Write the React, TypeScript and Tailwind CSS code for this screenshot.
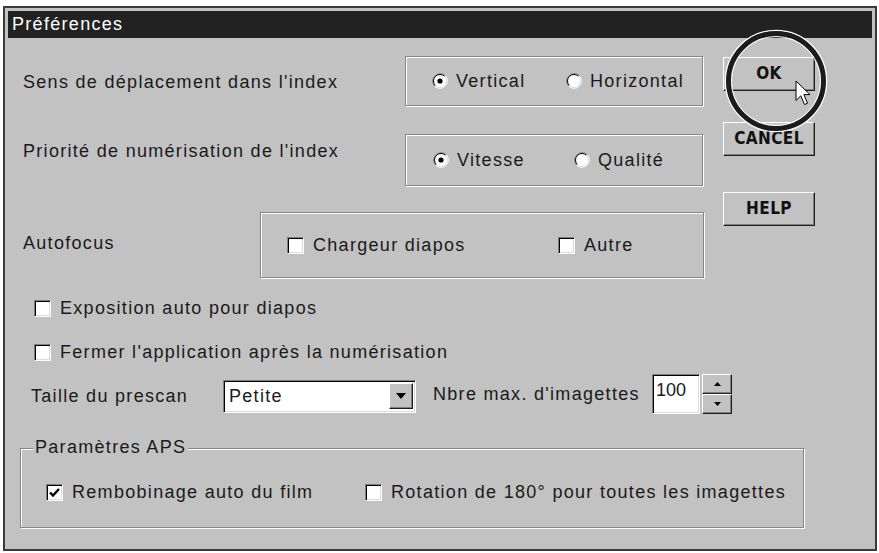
import type { ReactNode } from "react";

/** Old-style "Préférences" dialog: grey window, etched group boxes,
 *  3D buttons, with a highlight circle and cursor over the OK button. */

const label = "text-[18px] leading-[22px] tracking-[1.3px] text-[#1a1a1a] whitespace-nowrap";

function GroupBox({ className, children }: { className?: string; children?: ReactNode }) {
  return (
    <div
      className={`border border-[#858585] shadow-[inset_1px_1px_0_#fff,1px_1px_0_#fff] ${className ?? ""}`}
    >
      {children}
    </div>
  );
}

function Radio({ checked }: { checked?: boolean }) {
  return (
    <svg width="16" height="16" viewBox="0 0 16 16" className="shrink-0">
      <circle cx="8" cy="8" r="7" fill="#fff" />
      <path d="M2.7 13.3 A7.5 7.5 0 0 1 13.3 2.7" fill="none" stroke="#808080" strokeWidth="1" />
      <path d="M3.4 12.6 A6.5 6.5 0 0 1 12.6 3.4" fill="none" stroke="#000" strokeWidth="1" />
      <path d="M13.3 2.7 A7.5 7.5 0 0 1 2.7 13.3" fill="none" stroke="#fff" strokeWidth="1" />
      <path d="M12.6 3.4 A6.5 6.5 0 0 1 3.4 12.6" fill="none" stroke="#dcdcdc" strokeWidth="1" />
      {checked ? <circle cx="8" cy="8" r="2.6" fill="#000" /> : null}
    </svg>
  );
}

function Check({ checked }: { checked?: boolean }) {
  return (
    <span className="shrink-0 w-[17px] h-[17px] bg-white border border-t-[#808080] border-l-[#808080] border-r-white border-b-white shadow-[inset_1px_1px_0_#000,inset_-1px_-1px_0_#dcdcdc] flex items-center justify-center">
      {checked ? (
        <svg width="13" height="13" viewBox="0 0 13 13">
          <path d="M2 6.5 L5 9.5 L11 3" fill="none" stroke="#000" strokeWidth="2.4" />
        </svg>
      ) : null}
    </span>
  );
}

function RadioItem({ text, checked, className }: { text: string; checked?: boolean; className?: string }) {
  return (
    <div className={`flex items-center gap-[8px] ${className ?? ""}`}>
      <Radio checked={checked} />
      <span className={label}>{text}</span>
    </div>
  );
}

function CheckItem({ text, checked, className }: { text: string; checked?: boolean; className?: string }) {
  return (
    <div className={`flex items-center gap-[9px] ${className ?? ""}`}>
      <Check checked={checked} />
      <span className={label}>{text}</span>
    </div>
  );
}

function Button({ text, className }: { text: string; className?: string }) {
  return (
    <div
      className={`w-[92px] h-[34px] flex items-center justify-center bg-[#c2c2c2] border border-t-white border-l-white border-r-[#1e1e1e] border-b-[#1e1e1e] shadow-[inset_-1px_-1px_0_#808080] font-['DejaVu_Sans_Condensed','DejaVu_Sans',sans-serif] font-bold text-[17px] tracking-[0.4px] text-[#111] ${className ?? ""}`}
    >
      {text}
    </div>
  );
}

function Tri({ w, h, up }: { w: number; h: number; up?: boolean }) {
  return (
    <svg width={w} height={h} viewBox={`0 0 ${w} ${h}`}>
      <path d={up ? `M0 ${h} H${w} L${w / 2} 0 Z` : `M0 0 H${w} L${w / 2} ${h} Z`} fill="#000" />
    </svg>
  );
}

export default function App() {
  return (
    <div className="min-h-screen bg-white pt-[6px] pl-[3px] font-['Liberation_Sans',Arial,sans-serif]">
      <div className="relative w-[874px] h-[545px] border-2 border-[#3a3a3a] bg-[#c2c2c2] p-[3px]">
        {/* title bar */}
        <div className="h-[27px] bg-[#222] pl-[4px] flex items-center text-white text-[18px] tracking-[1.3px]">
          Préférences
        </div>

        {/* top section: option rows + button column */}
        <div className="flex">
          <div className="w-[697px] pl-[15px]">
            <div className="mt-[18px] flex h-[50px]">
              <div className={`w-[382px] pt-[15px] ${label}`}>Sens de déplacement dans l'index</div>
              <GroupBox className="w-[298px] h-[50px] flex items-center pl-[26px]">
                <RadioItem text="Vertical" checked className="w-[134px]" />
                <RadioItem text="Horizontal" />
              </GroupBox>
            </div>
            <div className="mt-[28px] flex h-[52px]">
              <div className={`w-[382px] pt-[6px] ${label}`}>Priorité de numérisation de l'index</div>
              <GroupBox className="w-[298px] h-[52px] flex items-center pl-[27px]">
                <RadioItem text="Vitesse" checked className="w-[141px]" />
                <RadioItem text="Qualité" />
              </GroupBox>
            </div>
            <div className="mt-[26px] flex h-[66px]">
              <div className={`w-[237px] pt-[20px] ${label}`}>Autofocus</div>
              <GroupBox className="w-[444px] h-[66px] flex items-center pl-[26px]">
                <CheckItem text="Chargeur diapos" className="w-[271px]" />
                <CheckItem text="Autre" />
              </GroupBox>
            </div>
          </div>
          <div className="ml-[18px] flex flex-col">
            <Button text="OK" className="mt-[19px]" />
            <Button text="CANCEL" className="mt-[31px] h-[33px]" />
            <Button text="HELP" className="mt-[36px] h-[33px]" />
          </div>
        </div>

        <div className="mt-[18px] h-[24px] flex items-center pl-[26px]">
          <CheckItem text="Exposition auto pour diapos" />
        </div>
        <div className="mt-[20px] h-[24px] flex items-center pl-[26px]">
          <CheckItem text="Fermer l'application après la numérisation" />
        </div>

        {/* prescan size + max thumbnails */}
        <div className="mt-[10px] h-[40px] flex items-center pl-[23px]">
          <span className={`w-[192px] pt-[4px] ${label}`}>Taille du prescan</span>
          <div className="mt-[4px] w-[193px] h-[33px] flex items-center bg-white border border-t-[#808080] border-l-[#808080] border-r-white border-b-white shadow-[inset_1px_1px_0_#000,inset_-1px_-1px_0_#dcdcdc] pl-[5px] pr-[2px]">
            <span className={`flex-1 ${label}`}>Petite</span>
            <span className="w-[24px] h-[26px] bg-[#c2c2c2] border border-t-white border-l-white border-r-[#1e1e1e] border-b-[#1e1e1e] shadow-[inset_-1px_-1px_0_#808080] flex items-center justify-center">
              <Tri w={10} h={6} />
            </span>
          </div>
          <span className={`ml-[17px] w-[219px] ${label}`}>Nbre max. d'imagettes</span>
          <div className="w-[48px] h-[40px] bg-white border border-t-[#808080] border-l-[#808080] border-r-white border-b-white shadow-[inset_1px_1px_0_#000,inset_-1px_-1px_0_#dcdcdc] pl-[3px] pt-[4px]">
            <span className="text-[18px] leading-[22px] text-[#1a1a1a]">100</span>
          </div>
          <div className="ml-[2px] w-[30px] h-[40px] flex flex-col">
            <span className="h-[20px] bg-[#c2c2c2] border border-t-white border-l-white border-r-[#1e1e1e] border-b-[#1e1e1e] shadow-[inset_-1px_-1px_0_#808080] flex items-center justify-center">
              <Tri w={7} h={4} up />
            </span>
            <span className="h-[20px] bg-[#c2c2c2] border border-t-white border-l-white border-r-[#1e1e1e] border-b-[#1e1e1e] shadow-[inset_-1px_-1px_0_#808080] flex items-center justify-center">
              <Tri w={7} h={4} />
            </span>
          </div>
        </div>

        {/* APS group */}
        <div className="relative mt-[34px] ml-[12px] w-[784px] h-[80px]">
          <GroupBox className="h-full flex items-center pt-[8px] pl-[25px]">
            <CheckItem text="Rembobinage auto du film" checked className="w-[319px]" />
            <CheckItem text="Rotation de 180° pour toutes les imagettes" />
          </GroupBox>
          <span className={`absolute left-[13px] top-[-12px] px-[2px] bg-[#c2c2c2] ${label}`}>
            Paramètres APS
          </span>
        </div>

        {/* highlight circle + cursor over OK */}
        <svg
          className="absolute left-[717px] top-[19px] pointer-events-none"
          width="110"
          height="110"
          viewBox="0 0 110 110"
        >
          <circle cx="54" cy="54" r="50.5" fill="none" stroke="#fff" strokeWidth="1.5" />
          <circle cx="54" cy="54" r="47.5" fill="none" stroke="#1c1c1c" strokeWidth="5" />
          <circle cx="54" cy="54" r="44.5" fill="none" stroke="#fff" strokeWidth="1" />
        </svg>
        <svg
          className="absolute left-[790px] top-[72px] pointer-events-none"
          width="18"
          height="28"
          viewBox="0 0 18 28"
        >
          <path
            d="M1 1 L1 20.5 L5.8 15.8 L9.5 24.5 L12.5 23.3 L8.9 14.6 L15 14.6 Z"
            fill="#fff"
            stroke="#000"
            strokeWidth="1"
            strokeLinejoin="miter"
          />
        </svg>
      </div>
    </div>
  );
}
